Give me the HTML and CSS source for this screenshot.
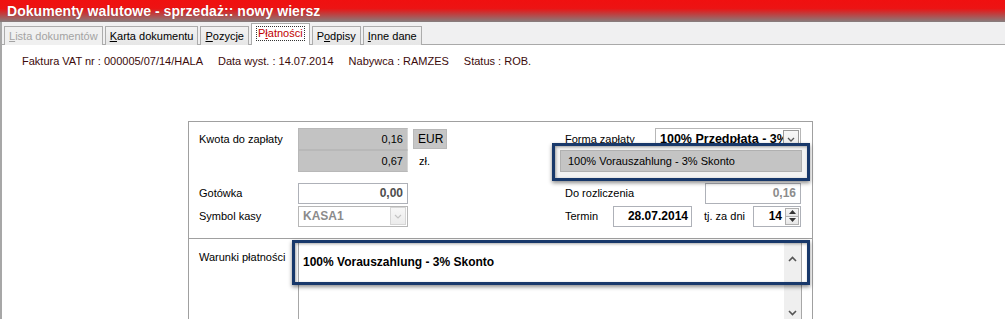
FILE: index.html
```html
<!DOCTYPE html>
<html lang="pl">
<head>
<meta charset="utf-8">
<title>Dokumenty walutowe</title>
<link rel="stylesheet" href="styles.css">
</head>
<body>
<div class="window">
  <div class="titlebar">Dokumenty walutowe - sprzedaż:: nowy wiersz</div>
  <div class="main">
    <div class="tabs">
      <span class="tab disabled"><u>L</u>ista dokumentów</span>
      <span class="tab"><u>K</u>arta dokumentu</span>
      <span class="tab"><u>P</u>ozycje</span>
      <span class="tab active"><span class="focus">P<u>ł</u>atności</span></span>
      <span class="tab">P<u>o</u>dpisy</span>
      <span class="tab"><u>I</u>nne dane</span>
    </div>
    <div class="info">
      <span>Faktura VAT nr : 000005/07/14/HALA</span>
      <span>Data wyst. : 14.07.2014</span>
      <span>Nabywca : RAMZES</span>
      <span>Status : ROB.</span>
    </div>
    <div class="panel">
      <div class="upper">
        <div class="col-left">
          <div class="row">
            <span class="lbl">Kwota do zapłaty</span>
            <span class="field ro">0,16</span>
            <span class="unit boxed">EUR</span>
          </div>
          <div class="row">
            <span class="lbl"></span>
            <span class="field ro">0,67</span>
            <span class="unit">zł.</span>
          </div>
          <div class="row gap">
            <span class="lbl">Gotówka</span>
            <span class="field input bold dim">0,00</span>
          </div>
          <div class="row tight">
            <span class="lbl">Symbol kasy</span>
            <span class="field combo disabled">
              <span class="combo-text">KASA1</span>
              <span class="combo-btn"><svg viewBox="0 0 8 5" width="8" height="5"><path d="M1 1 L4 4 L7 1" fill="none" stroke="#c4c4c4" stroke-width="1.2"/></svg></span>
            </span>
          </div>
        </div>
        <div class="col-right">
          <div class="row">
            <span class="lbl-r w-forma">Forma zapłaty</span>
            <span class="field combo forma">
              <span class="combo-text">100% Przedpłata - 3%</span>
              <span class="combo-btn"><svg viewBox="0 0 8 5" width="8" height="5"><path d="M1 1 L4 4 L7 1" fill="none" stroke="#555" stroke-width="1.3"/></svg></span>
            </span>
          </div>
          <div class="row"></div>
          <div class="row gap">
            <span class="lbl-r grow">Do rozliczenia</span>
            <span class="field input bold light w-rozl">0,16</span>
          </div>
          <div class="row tight">
            <span class="lbl-r w-termin">Termin</span>
            <span class="field input bold w-date">28.07.2014</span>
            <span class="lbl-r w-dni">tj. za dni</span>
            <span class="field input bold spin">
              <span class="spin-val">14</span>
              <span class="spin-btns">
                <span class="sb"><svg viewBox="0 0 7 4" width="7" height="4"><path d="M0 4 L3.5 0 L7 4 Z" fill="#333"/></svg></span>
                <span class="sb"><svg viewBox="0 0 7 4" width="7" height="4"><path d="M0 0 L3.5 4 L7 0 Z" fill="#333"/></svg></span>
              </span>
            </span>
          </div>
        </div>
      </div>
      <div class="lower">
        <span class="lbl">Warunki płatności</span>
        <div class="memo">
          <div class="memo-text">100% Vorauszahlung - 3% Skonto</div>
          <div class="memo-scroll">
            <svg viewBox="0 0 9 6" width="9" height="6"><path d="M1 5 L4.5 1.5 L8 5" fill="none" stroke="#555" stroke-width="1.6"/></svg>
            <svg viewBox="0 0 9 6" width="9" height="6"><path d="M1 1 L4.5 4.5 L8 1" fill="none" stroke="#555" stroke-width="1.6"/></svg>
          </div>
        </div>
      </div>
      <div class="hl hl1"><div class="hl-field">100% Vorauszahlung - 3% Skonto</div></div>
      <div class="hl hl2"></div>
    </div>
  </div>
</div>
</body>
</html>
```
FILE: styles.css
```css
* { box-sizing: border-box; }
html, body { margin: 0; padding: 0; background: #fff; }
body {
  font-family: "Liberation Sans", Arial, sans-serif;
  font-size: 11px;
  color: #000;
  width: 1005px;
  height: 319px;
  overflow: hidden;
}
.window { width: 1005px; height: 319px; display: flex; flex-direction: column; overflow: hidden; }
.titlebar {
  height: 22px;
  flex: none;
  background: linear-gradient(to bottom, #f01010 0%, #ec1313 38%, #c23c3c 62%, #857f7f 100%);
  color: #fff;
  font-weight: bold;
  font-size: 14px;
  line-height: 22px;
  padding-left: 7px;
  letter-spacing: 0.05px;
  white-space: nowrap;
  text-shadow: 0 0 1px rgba(80,0,0,.4);
}
.main { flex: 1; border-left: 2px solid #a7a7a7; min-height: 0; }
.tabs {
  height: 23px;
  background: #f0f0f1;
  border-bottom: 1px solid #a9a9a9;
  display: flex;
  align-items: flex-end;
  padding-left: 2px;
  gap: 2px;
}
.tab {
  height: 19px;
  margin-bottom: -1px;
  border: 1px solid #acacac;
  border-bottom: none;
  background: linear-gradient(#f2f2f2, #e6e6e6);
  padding: 0 4px;
  line-height: 18px;
  font-size: 11px;
  color: #000;
  white-space: nowrap;
}
.tab.disabled { color: #a3a3a3; background: #f0f0f0; padding: 0 4px; }
.tab.active {
  height: 22px;
  background: #fff;
  color: #c00000;
  padding: 2px 4px 0;
  line-height: 14px;
}
.tab.active .focus { display: inline-block; border: 1px dotted #333; padding: 0 1px; line-height: 13px; }
.info {
  height: 76px;
  padding: 10px 0 0 20px;
  display: flex;
  gap: 15px;
  color: #3c0a0a;
  font-size: 11px;
}
.panel {
  position: relative;
  margin-left: 186px;
  width: 625px;
  height: 198px;
  border: 1px solid #a0a0a0;
  border-bottom: none;
}
.upper {
  height: 117px;
  border-bottom: 1px solid #a0a0a0;
  display: flex;
  padding-top: 6px;
}
.col-left { width: 376px; padding-left: 10px; }
.col-right { width: 236px; }
.row { height: 22px; display: flex; align-items: center; }
.row.gap { margin-top: 10px; }
.row.tight { margin-top: 1px; }
.lbl { width: 99px; flex: none; }
.lbl-r { flex: none; }
.grow { flex: 1; }
.w-forma { width: 90px; text-decoration: underline; text-decoration-color: #555; }
.w-termin { width: 48px; }
.w-dni { width: 49px; margin-left: 12px; }
.field {
  height: 22px;
  width: 110px;
  flex: none;
  display: flex;
  align-items: center;
  justify-content: flex-end;
  padding-right: 4px;
}
.field.ro { background: #c3c3c3; border: 1px solid #b8b8b8; border-right-color: #d6d6d6; }
.field.input { background: #fff; border: 1px solid #aeb1b8; height: 21px; }
.bold { font-weight: bold; font-size: 12px; }
.dim { color: #4e4e4e; }
.light { color: #8c8c8c; }
.unit { margin-left: 5px; width: 34px; height: 20px; display: flex; align-items: center; padding-left: 6px; }
.unit.boxed { background: #c6c6c6; border: 1px solid #b9b9b9; padding-left: 4px; font-size: 12px; }
.combo { justify-content: space-between; padding: 0 1px 0 4px; background: #fff; border: 1px solid #b7b7b7; }
.combo.disabled { height: 21px; }
.combo.disabled .combo-text { color: #8b8b8b; font-weight: bold; font-size: 12px; }
.combo-btn {
  width: 16px; height: 18px;
  flex: none;
  display: flex; align-items: center; justify-content: center;
  border: 1px solid #d6d6d6;
  background: linear-gradient(#f7f7f7, #ececec);
}
.combo.forma { width: 146px; }
.combo.forma .combo-text { font-weight: bold; font-size: 12.5px; white-space: nowrap; overflow: hidden; min-width: 0; }
.combo.forma .combo-btn { border-color: #9a9a9a; }
.w-rozl { width: 96px; }
.w-date { width: 79px; padding-right: 3px; }
.spin { width: 48px; padding-right: 1px; gap: 3px; }
.spin-btns { display: flex; flex-direction: column; width: 14px; height: 17px; border: 1px solid #b0b0b0; }
.sb { flex: 1; display: flex; align-items: center; justify-content: center; background: linear-gradient(#f6f6f6, #e6e6e6); }
.sb + .sb { border-top: 1px solid #b0b0b0; }
.lower { display: flex; padding-top: 3px; height: 80px; }
.lower .lbl { padding-left: 10px; width: 109px; padding-top: 9px; }
.memo {
  width: 504px;
  height: 77px;
  border: 1px solid #a7a7a7;
  border-bottom: none;
  display: flex;
}
.memo-text { flex: 1; font-weight: bold; font-size: 12px; padding: 12px 0 0 4px; }
.memo-scroll {
  width: 17px;
  height: 100%;
  background: #efefef;
  display: flex; flex-direction: column; justify-content: space-between; align-items: center;
  padding: 13px 0 3px;
}
.hl {
  position: absolute;
  border: 3px solid #18386a;
  box-shadow: 0 2px 4px rgba(0,0,0,.45), inset 1px 1px 3px rgba(0,0,0,.35);
}
.hl1 {
  left: 363px; top: 21px; width: 258px; height: 38px;
  background: #f3f3f3;
  padding: 4px 5px 0;
}
.hl-field {
  height: 22px;
  background: #c4c4c4;
  border: 1px solid #b0b0b0;
  padding-left: 7px;
  line-height: 20px;
  font-size: 11px;
}
.hl2 { left: 103px; top: 118px; width: 518px; height: 45px; }
```
